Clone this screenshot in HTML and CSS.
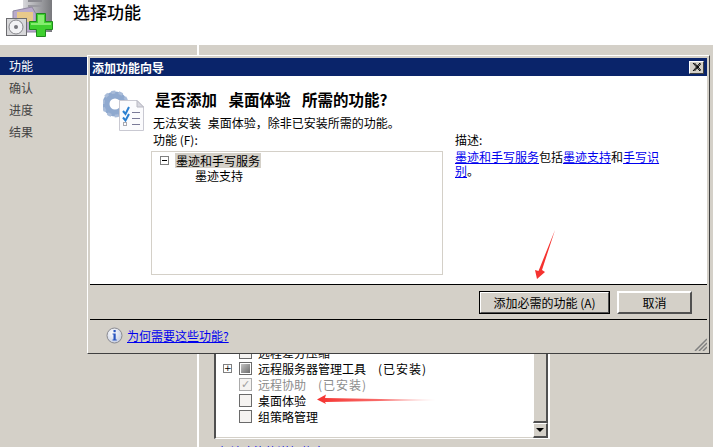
FILE: index.html
```html
<!DOCTYPE html>
<html lang="zh-CN">
<head>
    <meta charset="UTF-8">
    <title>添加功能向导</title>
    <link rel="stylesheet" href="styles.css">
</head>
<body>
    <div class="wizard">
        <header class="wizard-head">
            <svg class="head-icon" width="50" height="38" viewBox="0 0 50 38">
                <defs>
                    <linearGradient id="towerFill" x1="0" x2="1" y1="0" y2="0">
                        <stop offset="0" stop-color="#d8d8dc"/>
                        <stop offset="1" stop-color="#77787c"/>
                    </linearGradient>
                </defs>
                <!-- server tower -->
                <rect x="18" y="-4" width="29" height="36" fill="url(#towerFill)"/>
                <rect x="23" y="0" width="14" height="2" fill="#8a8a90"/>
                <rect x="23" y="5" width="14" height="2" fill="#9a9aa0"/>
                <!-- box and disc -->
                <path d="M8 11 L27 7 L31 14 L31 32 L8 32 Z" fill="#b9aacb" stroke="#8f87a0"/>
                <rect x="12" y="12" width="16" height="10" fill="#e8c98a"/>
                <rect x="1.500" y="18.500" width="20" height="17" fill="#d8d8da" stroke="#6c6c70"/>
                <circle cx="11" cy="27" r="7" fill="#f2f2f4" stroke="#85858a"/>
                <circle cx="11" cy="27" r="2" fill="#77777c"/>
                <!-- green plus -->
                <path d="M31.500 13.500 H40.500 V21.500 H47.500 V29.500 H40.500 V36.500 H31.500 V29.500 H24.500 V21.500 H31.500 Z" fill="#3fd02f" stroke="#1f8a1c"/>
                <path d="M33 15 H39 V23 H46 V25 H33 Z M26 23 H33 V25 H26 Z" fill="#86ec70"/>
            </svg>
            <h1 class="head-title">选择功能</h1>
        </header>
        <div class="wizard-body">
            <nav class="steps">
                <div class="step current">功能</div>
                <div class="step">确认</div>
                <div class="step">进度</div>
                <div class="step">结果</div>
            </nav>
            <main class="pane">
                <div class="feature-box">
                    <div class="feature-rows">
                        <div class="row"><span class="exp none"></span><span class="check"></span>远程差分压缩</div>
                        <div class="row"><span class="exp">+</span><span class="check partial"></span>远程服务器管理工具<span class="note">(已安装)</span></div>
                        <div class="row off"><span class="exp none"></span><span class="check ticked">✓</span>远程协助<span class="note">(已安装)</span></div>
                        <div class="row"><span class="exp none"></span><span class="check"></span>桌面体验</div>
                        <div class="row"><span class="exp none"></span><span class="check"></span>组策略管理</div>
                    </div>
                    <div class="scrollbar">
                        <div class="thumb"></div>
                        <div class="scroll-btn"><span class="tri-down"></span></div>
                    </div>
                </div>
                <a class="link more" href="#">有关功能的详细信息</a>
            </main>
        </div>
    </div>

    <div class="dialog">
        <div class="titlebar">
            <span>添加功能向导</span>
            <span class="close">
                <svg width="9" height="8" viewBox="0 0 9 8"><path d="M1 0 L8 8 M2.5 0 L9.5 8 M8 0 L1 8 M9.5 0 L2.5 8" stroke="#000" stroke-width="1"/></svg>
            </span>
        </div>
        <div class="dialog-main">
            <div class="dialog-top">
                <svg class="gear-icon" width="42" height="44" viewBox="0 0 42 44">
                    <!-- gear -->
                    <circle cx="12" cy="16" r="9" fill="none" stroke="#8fa9cf" stroke-width="7"/>
                    <circle cx="12" cy="16" r="12" fill="none" stroke="#a9bcd9" stroke-width="3" stroke-dasharray="4 3.5"/>
                    <!-- sheet -->
                    <path d="M16.500 12.500 H34 L40.500 19 V42.500 H16.500 Z" fill="#fbfbfd" stroke="#c9c9d2"/>
                    <path d="M34 12.500 V19 H40.500 Z" fill="#d8d8e0" stroke="#b8b8c2"/>
                    <path d="M20 23 L22.500 26 L26 19" fill="none" stroke="#2a7fd0" stroke-width="2"/>
                    <path d="M20 29.500 L22.500 32.500 L26 26" fill="none" stroke="#2a7fd0" stroke-width="2"/>
                    <rect x="20.500" y="34.500" width="3" height="3" fill="none" stroke="#a8a8b0"/>
                    <path d="M29 24.500 H37 M29 30.500 H37 M29 36.500 H37" stroke="#7a7a98"/>
                </svg>
                <div class="dialog-head">
                    <h2>是否添加 桌面体验 所需的功能?</h2>
                    <p>无法安装 桌面体验，除非已安装所需的功能。</p>
                </div>
            </div>
            <div class="dialog-cols">
                <div class="col-tree">
                    <div class="col-label">功能 (F):</div>
                    <div class="tree">
                        <div class="tree-item"><span class="tree-toggle"></span><span class="tree-text selected">墨迹和手写服务</span></div>
                        <div class="tree-child">墨迹支持</div>
                    </div>
                </div>
                <div class="col-desc">
                    <div class="col-label">描述:</div>
                    <p class="desc"><a class="link" href="#">墨迹和手写服务</a>包括<a class="link" href="#">墨迹支持</a>和<a class="link" href="#">手写识别</a>。</p>
                </div>
            </div>
        </div>
        <div class="dialog-buttons">
            <button class="btn default">添加必需的功能 (A)</button>
            <button class="btn cancel">取消</button>
        </div>
        <div class="dialog-foot">
            <svg width="17" height="17" viewBox="0 0 17 17">
                <defs>
                    <radialGradient id="infoFill" cx="0.4" cy="0.35" r="0.7">
                        <stop offset="0" stop-color="#ffffff"/>
                        <stop offset="1" stop-color="#c3cbe0"/>
                    </radialGradient>
                </defs>
                <circle cx="8.500" cy="8.500" r="7.500" fill="url(#infoFill)" stroke="#8a8a90"/>
                <rect x="7.500" y="3" width="2.200" height="2.200" fill="#2a56c0"/>
                <path d="M6.500 6.500 H9.700 V12.500 H10.800 V13.500 H6.500 V12.500 H7.500 V7.500 H6.500 Z" fill="#2a56c0"/>
            </svg>
            <a class="link" href="#">为何需要这些功能?</a>
        </div>
        <svg class="grip" width="13" height="13" viewBox="0 0 13 13">
            <path d="M1 13 L13 1 M5 13 L13 5 M9 13 L13 9" stroke="#808080" stroke-width="1.500"/>
        </svg>
    </div>

    <!-- red arrows drawn on top of the screenshot -->
    <svg class="marks" width="713" height="447" viewBox="0 0 713 447">
        <defs>
            <linearGradient id="tailFade" x1="317" x2="436" y1="0" y2="0" gradientUnits="userSpaceOnUse">
                <stop offset="0" stop-color="#f5322f"/>
                <stop offset="0.5" stop-color="#f86a68"/>
                <stop offset="1" stop-color="#fcd5d5"/>
            </linearGradient>
        </defs>
        <path d="M555 230 L542 270 L545 272 L537 279 L535 270 L538.500 271 Z" fill="#f5322f"/>
        <path d="M317 399.500 L326 394.500 L325 398 L436 400 L325 402 L326 404 Z" fill="url(#tailFade)"/>
    </svg>
</body>
</html>
```

FILE: styles.css
```css
* {
    box-sizing: border-box;
}
html, body {
    margin: 0;
    height: 447px;
    overflow: hidden;
}
body {
    position: relative;
    font-family: "Noto Sans CJK SC", "Liberation Sans", sans-serif;
    font-size: 12px;
    color: #000;
    background: #d4d0c8;
}
.link {
    color: #0000ee;
    text-decoration: underline;
}

/* wizard behind the dialog */
.wizard {
    display: flex;
    flex-direction: column;
    height: 447px;
    overflow: hidden;
}
.wizard-head {
    display: flex;
    flex: none;
    align-items: flex-start;
    height: 45px;
    background: #fff;
    padding-left: 5px;
}
.head-icon {
    display: block;
    flex: none;
}
.head-title {
    margin: 1px 0 0 18px;
    font-size: 17px;
    line-height: 22px;
    font-weight: 500;
}
.wizard-body {
    display: flex;
    flex: 1;
    min-height: 0;
}
.steps {
    width: 199px;
    padding-top: 12px;
    border-right: 2px solid #fff;
}
.step {
    height: 18px;
    line-height: 18px;
    margin-bottom: 4px;
    padding-left: 9px;
    color: #444;
}
.step.current {
    background: #0a246a;
    color: #fff;
}
.pane {
    flex: 1;
    padding: 255px 0 0 15px;
}
.feature-box {
    display: flex;
    width: 336px;
    height: 139px;
    background: #fff;
    border-left: 2px solid #505050;
    border-top: 2px solid #505050;
    border-right: 2px solid #fff;
    border-bottom: 1px solid #fff;
    box-shadow: inset 0 -1px 0 #d4d0c8;
}
.feature-rows {
    flex: 1;
    display: flex;
    flex-direction: column;
    justify-content: flex-end;
    padding: 0 0 14px 7px;
}
.row {
    display: flex;
    align-items: center;
    height: 16px;
    white-space: nowrap;
}
.row.off {
    color: #8c8c8c;
}
.exp {
    width: 9px;
    height: 9px;
    margin-right: 7px;
    border: 1px solid #808080;
    font-size: 9px;
    line-height: 7px;
    text-align: center;
    font-family: "DejaVu Sans", sans-serif;
}
.exp.none {
    border: 0;
}
.check {
    width: 13px;
    height: 13px;
    margin-right: 6px;
    border: 1px solid #6a6a6a;
    background: #f5f3f1;
    color: #a0a0a0;
    font-size: 11px;
    line-height: 11px;
    text-align: center;
    font-family: "DejaVu Sans", sans-serif;
}
.check.partial {
    background: #fff;
    padding: 1px;
}
.check.partial::before {
    content: "";
    display: block;
    width: 9px;
    height: 9px;
    background: linear-gradient(135deg, #c4c4c4, #6c6c6c);
}
.check.ticked {
    border-color: #aaa;
}
.note {
    margin-left: 12px;
    letter-spacing: 1px;
}
.scrollbar {
    display: flex;
    flex-direction: column;
    width: 15px;
    background: #d4d0c8;
}
.thumb {
    flex: 1;
    border-left: 1px solid #fff;
    border-right: 2px solid #505050;
    border-bottom: 2px solid #505050;
}
.scroll-btn {
    display: flex;
    align-items: center;
    justify-content: center;
    height: 15px;
    border-top: 1px solid #fff;
    border-left: 1px solid #fff;
    border-right: 2px solid #505050;
    border-bottom: 2px solid #505050;
}
.tri-down {
    width: 0;
    height: 0;
    border-left: 4px solid transparent;
    border-right: 4px solid transparent;
    border-top: 4px solid #000;
}
.more {
    display: block;
    margin: 5px 0 0 3px;
    line-height: 16px;
}

/* dialog window */
.dialog {
    position: absolute;
    left: 87px;
    top: 55px;
    width: 623px;
    height: 299px;
    padding: 2px;
    display: flex;
    flex-direction: column;
    background: #d4d0c8;
    border: 1px solid;
    border-color: #fff #404040 #404040 #fff;
}
.titlebar {
    display: flex;
    align-items: center;
    justify-content: space-between;
    height: 18px;
    padding: 0 3px 0 2px;
    background: #0a246a;
    color: #fff;
    font-weight: 700;
}
.close {
    display: flex;
    align-items: center;
    justify-content: center;
    width: 15px;
    height: 13px;
    background: #d4d0c8;
    border: 1px solid;
    border-color: #fff #404040 #404040 #fff;
}
.dialog-main {
    height: 208px;
    background: #fff;
}
.dialog-top {
    display: flex;
    height: 56px;
    padding: 12px 0 0 13px;
}
.gear-icon {
    flex: none;
}
.dialog-head {
    margin-left: 8px;
}
.dialog-head h2 {
    margin: 1px 0 0 2px;
    font-size: 15.5px;
    line-height: 20px;
    font-weight: 700;
    word-spacing: 8px;
}
.dialog-head p {
    margin: 6px 0 0;
    line-height: 16px;
    white-space: nowrap;
    word-spacing: 4px;
}
.dialog-cols {
    display: flex;
    gap: 12px;
    padding-left: 61px;
}
.col-tree {
    width: 292px;
}
.col-label {
    height: 16px;
    line-height: 16px;
    margin-bottom: 3px;
    padding-left: 2px;
}
.col-desc {
    width: 206px;
}
.col-desc .col-label {
    padding-left: 0;
    margin-bottom: 2px;
}
.tree {
    height: 124px;
    padding-top: 1px;
    border: 1px solid #d4d0c8;
}
.tree-item {
    display: flex;
    align-items: center;
    height: 15px;
    padding-left: 8px;
}
.tree-toggle {
    position: relative;
    width: 9px;
    height: 9px;
    margin-right: 6px;
    border: 1px solid #808080;
}
.tree-toggle::before {
    content: "";
    position: absolute;
    left: 1px;
    top: 3px;
    width: 5px;
    height: 1px;
    background: #000;
}
.tree-text {
    line-height: 15px;
    padding: 0 1px;
}
.tree-text.selected {
    background: #d4d0c8;
}
.tree-child {
    margin-left: 43px;
    line-height: 15px;
}
.desc {
    margin: 0;
    line-height: 14px;
}
.dialog-buttons {
    display: flex;
    flex: none;
    justify-content: flex-end;
    gap: 7px;
    height: 35px;
    padding: 6px 15px 0 0;
    border-top: 1px solid #000;
}
.btn {
    height: 23px;
    padding: 0;
    font: inherit;
    color: #000;
    background: #d4d0c8;
    border: 2px solid;
    border-color: #fff #505050 #505050 #fff;
}
.btn.default {
    width: 131px;
    outline: 1px solid #000;
    outline-offset: -1px;
}
.btn.cancel {
    width: 75px;
}
.dialog-foot {
    display: flex;
    align-items: center;
    gap: 4px;
    flex: 1;
    padding-left: 16px;
    border-top: 1px solid #000;
}
.grip {
    position: absolute;
    right: 2px;
    bottom: 2px;
}
.marks {
    position: absolute;
    left: 0;
    top: 0;
    pointer-events: none;
}
```
